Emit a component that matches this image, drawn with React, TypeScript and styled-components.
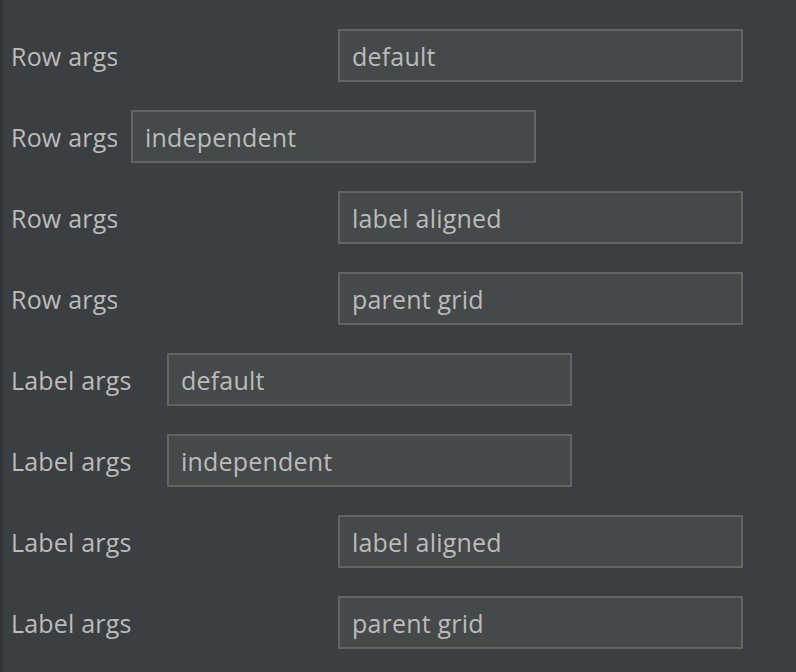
import React from 'react';
import styled, { createGlobalStyle } from 'styled-components';

const GlobalStyle = createGlobalStyle`
  html, body {
    margin: 0;
    padding: 0;
    background: #3c3f41;
  }
  #root {
    min-height: 100vh;
  }
`;

const Frame = styled.div`
  display: flex;
  width: 796px;
  height: 672px;
  background: #3c3f41;
  overflow: hidden;
`;

const Strip = styled.div`
  width: 3px;
  flex-shrink: 0;
  background: #333537;
`;

const Panel = styled.div`
  display: flex;
  flex-direction: column;
  padding: 29px 0 0 8px;
  gap: 28px;
`;

const Row = styled.div<{ $cols: string }>`
  display: grid;
  grid-template-columns: ${p => p.$cols};
  align-items: center;
  height: 53px;
`;

const Label = styled.div`
  overflow: hidden;
  white-space: nowrap;
  font-family: 'Open Sans', 'Noto Sans', sans-serif;
  font-size: 25px;
  letter-spacing: 0.2px;
  color: #bbbbbb;
`;

const Field = styled.div`
  box-sizing: border-box;
  width: 405px;
  height: 53px;
  display: flex;
  align-items: center;
  padding-left: 12px;
  background: #45494a;
  border: 2px solid #646464;
  font-family: 'Open Sans', 'Noto Sans', sans-serif;
  font-size: 25px;
  letter-spacing: 0.2px;
  color: #bbbbbb;
`;

const rows = [
  { label: 'Row args', text: 'default', cols: '106px 221px 405px' },
  { label: 'Row args', text: 'independent', cols: '106px 14px 405px' },
  { label: 'Row args', text: 'label aligned', cols: '106px 221px 405px' },
  { label: 'Row args', text: 'parent grid', cols: '106px 221px 405px' },
  { label: 'Label args', text: 'default', cols: '156px 0px 405px' },
  { label: 'Label args', text: 'independent', cols: '156px 0px 405px' },
  { label: 'Label args', text: 'label aligned', cols: '156px 171px 405px' },
  { label: 'Label args', text: 'parent grid', cols: '156px 171px 405px' },
];

export default function App() {
  return (
    <>
      <GlobalStyle />
      <Frame>
        <Strip />
        <Panel>
          {rows.map((r, i) => (
            <Row key={i} $cols={r.cols}>
              <Label>{r.label}</Label>
              <span />
              <Field>{r.text}</Field>
            </Row>
          ))}
        </Panel>
      </Frame>
    </>
  );
}
